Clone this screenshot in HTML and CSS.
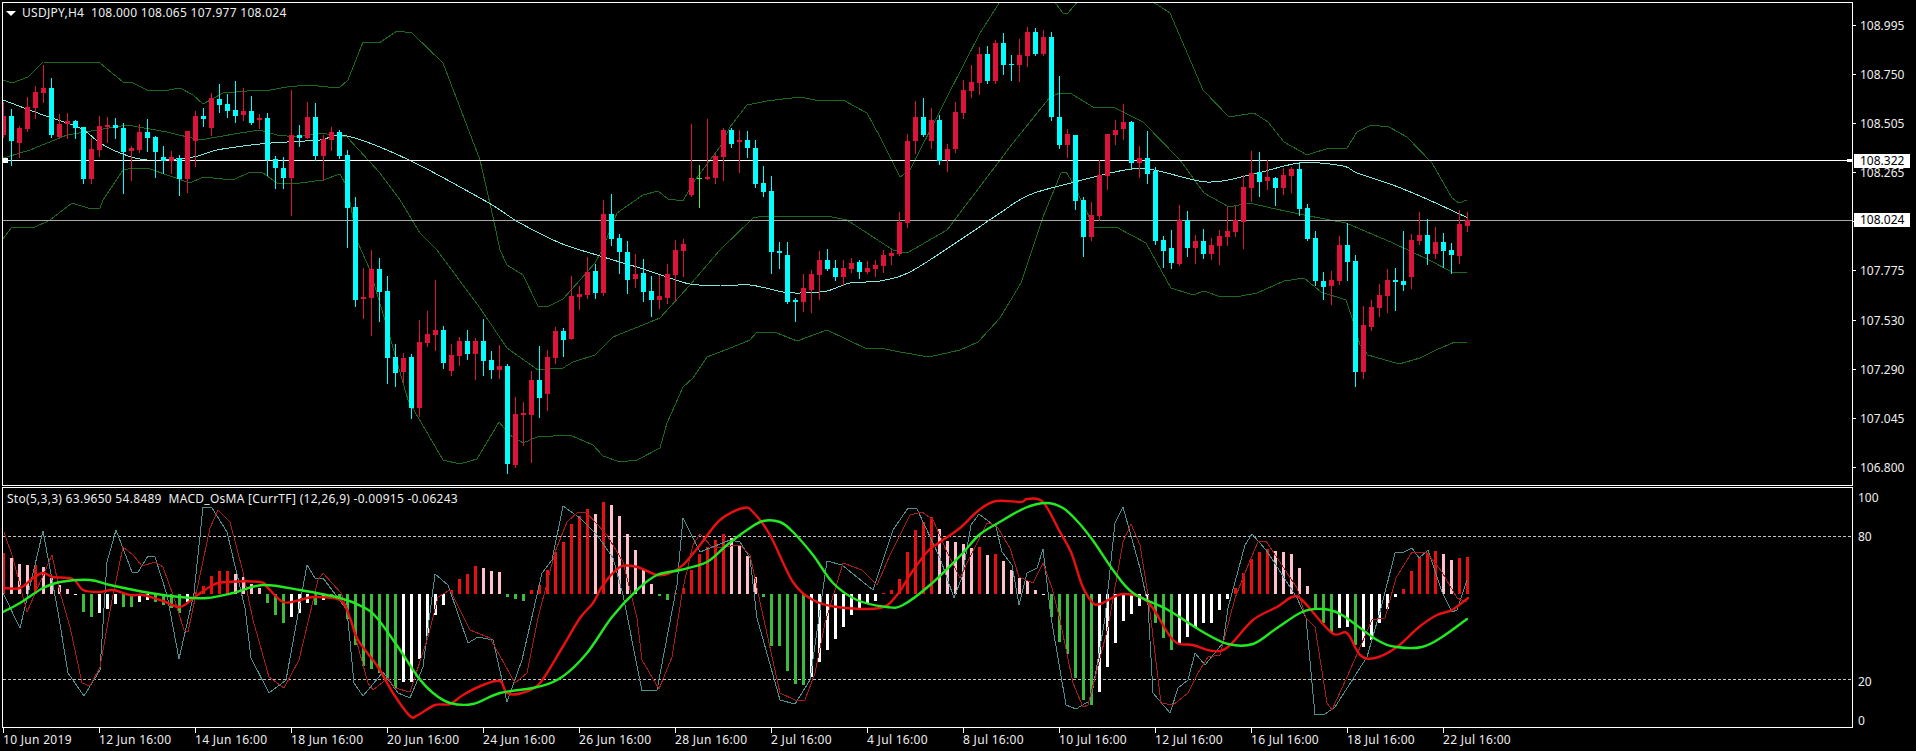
FILE: index.html
```html
<!DOCTYPE html>
<html lang="en">
<head>
<meta charset="utf-8">
<title>USDJPY,H4</title>
<link rel="stylesheet" href="styles.css">
</head>
<body>
<main class="chart">
  <section class="pane pane-main">
    <div class="plot">
      <svg id="main-svg" class="canvas" viewBox="3 3 1849 482" preserveAspectRatio="none"></svg>
      <div class="legend legend-main"><span class="tri"></span><span>USDJPY,H4&nbsp; 108.000 108.065 107.977 108.024</span></div>
    </div>
    <div class="scale scale-main">
      <div class="tick">108.995</div>
      <div class="tick">108.750</div>
      <div class="tick">108.505</div>
      <div class="tick">108.265</div>
      <div class="tick"></div>
      <div class="tick">107.775</div>
      <div class="tick">107.530</div>
      <div class="tick">107.290</div>
      <div class="tick">107.045</div>
      <div class="tick">106.800</div>
      <div class="tag tag-line">108.322</div>
      <div class="tag tag-bid">108.024</div>
    </div>
  </section>
  <section class="pane pane-sub">
    <div class="plot">
      <svg id="sub-svg" class="canvas" viewBox="3 488 1849 239" preserveAspectRatio="none"></svg>
      <div class="legend legend-sub">Sto(5,3,3) 63.9650 54.8489&nbsp; MACD_OsMA [CurrTF] (12,26,9) -0.00915 -0.06243</div>
    </div>
    <div class="scale scale-sub">
      <div class="lvl lvl-100">100</div>
      <div class="lvl lvl-80">80</div>
      <div class="lvl lvl-20">20</div>
      <div class="lvl lvl-0">0</div>
    </div>
  </section>
  <footer class="times">
    <div class="time">10 Jun 2019</div>
    <div class="time">12 Jun 16:00</div>
    <div class="time">14 Jun 16:00</div>
    <div class="time">18 Jun 16:00</div>
    <div class="time">20 Jun 16:00</div>
    <div class="time">24 Jun 16:00</div>
    <div class="time">26 Jun 16:00</div>
    <div class="time">28 Jun 16:00</div>
    <div class="time">2 Jul 16:00</div>
    <div class="time">4 Jul 16:00</div>
    <div class="time">8 Jul 16:00</div>
    <div class="time">10 Jul 16:00</div>
    <div class="time">12 Jul 16:00</div>
    <div class="time">16 Jul 16:00</div>
    <div class="time">18 Jul 16:00</div>
    <div class="time">22 Jul 16:00</div>
  </footer>
</main>
<script src="script.js"></script>
</body>
</html>
```
FILE: styles.css
```css
* { box-sizing: border-box; }
html, body { margin: 0; height: 751px; background: #000; overflow: hidden; }
body { font-family: "Noto Sans", "Liberation Sans", sans-serif; font-size: 12px; color: #eee; }
.chart { padding: 2px 0 0 2px; }
.pane { display: flex; }
.pane-sub { margin-top: 1px; }
.plot { position: relative; width: 1851px; border: 1px solid #fff; }
.pane-main .plot { height: 484px; }
.pane-sub .plot { height: 241px; }
.canvas { display: block; width: 100%; height: 100%; }
.legend { position: absolute; white-space: pre; line-height: 14px; letter-spacing: .28px; }
.legend-main { top: 3px; left: 3px; display: flex; align-items: center; gap: 6px; }
.legend-sub { top: 4px; left: 4px; }
.tri { width: 0; height: 0; border-left: 5px solid transparent; border-right: 5px solid transparent; border-top: 5px solid #fff; }
.scale { position: relative; width: 63px; }
.scale-main { display: flex; flex-direction: column; gap: 35.1px; padding-top: 17px; }
.tick { position: relative; height: 14px; line-height: 14px; padding-left: 7px; }
.tick::before { content: ""; position: absolute; left: 0; top: 6px; width: 3px; height: 1px; background: #fff; }
.tag { position: absolute; left: 1px; width: 56px; padding-left: 6px; background: #fff; color: #000; height: 14px; line-height: 14px; }
.tag-line { top: 152px; }
.tag-bid { top: 211px; }
.lvl { position: absolute; left: 5px; height: 14px; line-height: 14px; }
.lvl-100 { top: 4px; }
.lvl-80 { top: 43px; }
.lvl-20 { top: 188px; }
.lvl-0 { top: 227px; }
.times { display: flex; padding-left: 1px; }
.time { width: 96px; flex: none; line-height: 14px; letter-spacing: .3px; white-space: nowrap; }
.time::before { content: ""; display: block; width: 1px; height: 5px; background: #fff; }
.hline { shape-rendering: crispEdges; stroke-width: 1; }
.hline-white { stroke: #fff; }
.hline-grey { stroke: #a8a8a8; }
.hline-dash { stroke: #c4c4c4; stroke-dasharray: 3 2; }
.mark { fill: #fff; shape-rendering: crispEdges; }
.line { fill: none; stroke-linejoin: round; stroke-linecap: round; }
.band { stroke: #1c6a1e; stroke-width: 1; shape-rendering: crispEdges; }
.ma { stroke: #7fe6e0; stroke-width: 1; shape-rendering: crispEdges; }
.sto { stroke: #4f8f90; stroke-width: 1; shape-rendering: crispEdges; }
.sig { stroke: #a81c1c; stroke-width: 1; shape-rendering: crispEdges; }
.thick-r { stroke: #e81010; stroke-width: 2.4; }
.thick-g { stroke: #22ea22; stroke-width: 2.4; }
.bar { shape-rendering: crispEdges; }
.c0 { fill: #dc143c; }
.c1 { fill: #00ffff; }
.c2 { fill: #44ee44; }
.hr { fill: #e81010; }
.hp { fill: #ffc0cb; }
.hw { fill: #fff; }
.hg { fill: #3cbc3c; }
```
FILE: script.js
```js
(function () {
const candles = [
[0,102,116,135,137],[1,109,116,141,165],[0,126,128,143,157],[0,97,107,129,131],[0,86,92,108,118],[0,65,88,93,102],[1,78,88,135,137],[0,114,124,137,138],
[0,113,121,124,138],[1,120,121,128,138],[1,127,127,179,183],[0,138,149,179,183],[0,116,126,150,156],[0,117,125,127,142],[1,118,125,128,138],[1,123,128,152,193],
[0,146,148,151,180],[0,124,132,150,152],[1,119,132,138,151],[1,136,137,152,177],[1,146,157,161,173],[0,151,157,161,173],[1,155,158,179,195],[0,131,131,179,192],
[0,111,116,141,166],[1,108,116,119,126],[0,93,98,128,135],[1,84,99,105,112],[1,94,104,111,117],[1,81,110,116,122],[0,88,111,115,120],[1,96,111,123,124],
[0,114,118,120,128],[1,113,118,160,175],[1,156,159,168,188],[1,157,168,178,188],[0,90,135,178,215],[1,125,135,138,146],[0,102,117,138,138],[1,103,117,156,160],
[0,135,139,156,180],[0,127,132,140,150],[1,130,132,156,158],[1,150,155,208,247],[1,197,207,300,306],[0,268,297,299,318],[0,250,269,298,335],[1,258,269,292,321],
[1,276,291,358,383],[1,344,357,373,386],[0,353,358,372,382],[1,354,357,408,418],[0,320,342,408,416],[0,311,334,343,346],[0,280,330,335,350],[1,326,330,363,368],
[0,344,355,371,375],[0,337,341,356,365],[1,330,341,354,359],[0,338,341,354,379],[1,319,341,361,375],[1,351,360,370,378],[0,345,366,370,378],[1,364,366,464,473],
[0,397,414,465,467],[0,402,413,415,445],[0,371,380,415,462],[1,346,380,398,417],[0,350,357,394,410],[0,327,331,358,363],[1,328,331,340,356],[0,276,296,339,339],
[0,286,294,297,309],[0,257,272,295,298],[1,264,271,293,298],[0,200,214,293,295],[1,194,214,239,245],[1,234,238,252,273],[1,241,252,280,293],[0,254,274,279,287],
[1,259,273,292,301],[1,276,291,300,316],[0,275,296,300,308],[0,264,274,298,303],[0,240,250,275,301],[0,239,244,251,276],[0,124,178,195,196],[2,165,178,179,207],
[0,119,177,179,179],[0,153,156,178,183],[0,128,130,157,180],[1,128,130,144,147],[0,130,140,142,172],[1,131,140,148,157],[1,140,148,184,187],[1,166,183,192,196],
[1,176,191,252,273],[1,242,251,253,268],[1,242,255,302,303],[1,298,300,302,321],[0,274,288,302,311],[0,270,274,290,312],[0,251,260,275,299],[1,249,260,269,270],
[1,260,268,277,280],[0,260,268,277,285],[0,258,263,269,272],[1,260,262,272,278],[0,261,268,272,273],[0,260,265,269,276],[0,250,255,266,272],[0,250,253,256,264],
[0,212,222,254,255],[0,134,141,223,227],[0,101,117,141,153],[1,98,117,135,136],[0,108,120,141,148],[1,115,120,161,164],[0,144,149,160,171],[0,102,112,149,152],
[0,80,90,113,118],[0,65,82,91,97],[0,47,54,83,94],[1,46,54,81,83],[0,40,43,81,83],[1,33,43,65,74],[1,55,64,65,80],[0,39,55,65,81],
[0,27,32,56,66],[1,28,32,54,55],[0,30,37,54,55],[1,32,37,117,120],[1,76,117,145,148],[0,129,134,145,157],[1,135,135,201,209],[1,197,200,237,256],
[0,202,215,237,240],[0,160,175,216,220],[0,134,134,176,189],[0,120,130,135,144],[0,104,122,129,139],[1,121,122,163,168],[0,146,158,163,177],[1,131,158,174,183],
[1,167,171,241,244],[1,236,240,251,267],[1,230,248,263,268],[0,205,220,264,265],[1,211,220,248,256],[0,235,241,248,263],[1,229,241,254,258],[0,238,245,254,259],
[0,230,236,246,264],[0,207,231,237,245],[0,206,220,232,236],[0,175,187,222,248],[0,151,173,188,201],[1,152,172,182,196],[0,160,177,181,189],[1,177,178,188,205],
[0,168,175,188,194],[0,167,169,176,192],[1,162,169,209,215],[1,204,208,239,240],[1,231,238,281,285],[1,272,281,287,299],[0,271,280,286,304],[0,236,245,281,284],
[1,223,245,262,280],[1,255,261,372,386],[0,306,325,372,378],[0,300,307,327,330],[0,284,295,308,316],[0,269,280,296,312],[1,268,280,282,310],[1,231,281,285,290],
[0,234,240,277,288],[0,212,235,241,244],[1,219,235,254,264],[0,227,242,254,258],[1,233,242,251,267],[1,243,250,255,273],[0,210,224,256,263],[0,212,220,226,231]
];

const hist = "r41 p36 p30 p29 r29 p27 p16 p9 p5 w-1 g-18 g-23 w-19 w-15 w-10 g-13 g-13 w-8 w-6 g-8 g-11 g-14 g-19 w-8 r2 r8 r18 r23 r23 p20 p17 p10 p6 g-9 g-21 g-29 w-23 w-19 w-9 g-11 w-6 g-1 g-3 g-25 g-51 g-72 g-75 g-79 g-86 g-95 w-88 w-88 w-65 w-42 w-21 w-11 r4 r15 r20 r28 p26 p23 p22 g-3 g-5 g-7 r4 r9 r24 r42 r52 r70 r78 r85 p80 r92 p89 p78 p60 p44 p24 p10 g-2 g-6 r1 r6 r24 r40 r47 r54 r60 p56 p49 p38 p17 g-3 g-52 g-52 g-77 g-90 g-91 w-83 w-68 w-56 w-45 w-33 w-21 w-14 w-9 w-7 r1 r4 r15 r42 r64 r72 r77 p65 p53 p52 p50 p46 r47 p39 r40 p33 p24 p16 p13 p4 w-1 g-23 g-48 g-60 g-84 g-106 g-111 w-98 w-73 w-49 w-27 w-20 w-12 w-8 g-29 g-44 g-56 w-49 w-43 w-34 w-29 w-29 w-16 w-5 r6 r21 r35 r42 r45 p43 p42 p40 p26 p8 g-14 g-29 g-39 w-34 w-33 g-51 w-53 w-46 w-29 w-15 w-3 r5 r23 r37 r41 r43 p40 p34 r36 r37".split(" ");

const bandTop = "3,80 12,83 28,77 43,62 100,63 123,82 133,83 147,90 163,91 180,88 193,95 203,104 223,93 247,91 270,90 287,87 307,85 339,88 348,80 363,42 379,43 397,31 412,33 443,63 480,160 493,217 500,250 507,265 523,275 538,306 547,307 563,299 580,280 595,263 602,250 617,213 643,195 658,191 668,199 683,201 693,183 720,147 730,127 747,105 767,101 800,97 820,101 843,100 867,113 880,137 900,177 910,170 947,97 980,33 1001,0 1040,-12 1053,0 1063,13 1068,13 1079,0 1115,-12 1150,0 1170,13 1203,90 1229,117 1254,113 1268,122 1284,142 1307,155 1329,148 1347,148 1357,132 1371,125 1389,127 1407,137 1432,163 1452,198 1459,203 1467,200";
const bandMid = "3,158 7,157 30,150 67,135 127,125 167,132 200,140 240,133 260,130 277,135 297,137 320,133 347,137 380,173 400,200 420,233 437,250 480,308 507,348 538,370 563,368 573,362 595,355 613,337 660,318 690,285 720,250 753,218 763,216 827,216 847,220 893,250 907,253 947,230 1013,143 1050,97 1060,93 1070,93 1093,107 1113,107 1143,122 1180,160 1204,193 1229,207 1250,203 1271,208 1304,215 1346,223 1393,243 1429,260 1452,272 1467,272";
const bandLow = "3,239 12,227 33,228 50,220 72,203 88,208 100,208 103,200 123,170 133,168 147,168 173,177 190,183 203,177 233,180 250,172 263,173 277,183 300,183 323,180 340,174 347,187 358,243 370,270 387,327 408,400 443,460 460,464 477,459 499,422 510,435 523,443 537,437 570,435 593,445 603,456 620,462 637,460 660,448 667,423 683,387 693,378 707,357 733,347 750,340 757,332 777,333 797,341 827,330 867,349 880,348 900,352 929,357 960,350 978,342 1000,318 1021,283 1043,217 1061,173 1066,172 1073,183 1094,227 1118,228 1146,243 1171,288 1193,295 1204,291 1218,296 1236,297 1257,293 1284,281 1304,278 1321,292 1346,300 1355,327 1360,345 1368,355 1399,364 1420,358 1436,350 1455,342 1467,343";
const ma = "3,100 43,115 80,128 100,143 120,153 147,160 193,157 217,150 260,144 287,142 320,140 347,136 407,159 480,198 500,210 520,223 560,243 600,256 640,268 667,277 690,284 720,286 750,285 783,292 800,293 827,291 850,283 880,281 910,272 960,240 975,230 1000,213 1029,195 1071,183 1125,170 1154,170 1207,182 1250,175 1300,163 1343,166 1357,173 1393,185 1429,200 1468,218";

const sto = "3,593 20,628 43,531 58,612 68,673 84,696 100,670 107,562 116,530 132,572 138,572 148,556 155,557 167,595 179,659 194,593 203,507 212,508 227,532 245,608 251,658 269,693 286,680 307,565 315,578 323,578 347,610 354,683 363,696 383,672 398,693 410,698 423,667 435,574 448,585 468,643 478,637 493,640 507,702 522,660 542,573 552,560 563,506 580,518 597,535 613,558 623,595 642,691 657,690 677,585 683,518 700,552 730,540 740,542 750,558 757,618 780,700 795,704 810,680 827,561 842,565 873,590 893,530 908,508 917,509 940,558 954,598 962,577 971,525 979,514 996,527 1002,552 1012,565 1019,605 1027,573 1037,568 1043,549 1051,617 1066,705 1076,709 1091,700 1105,618 1115,523 1123,507 1140,568 1148,605 1153,693 1170,713 1178,688 1188,680 1195,653 1205,665 1223,643 1228,608 1245,545 1252,534 1266,550 1274,562 1297,598 1306,618 1315,715 1325,714 1335,707 1367,657 1381,608 1395,553 1404,552 1412,548 1419,558 1428,550 1442,592 1452,612 1457,610 1467,580";
const sig = "4,532 13,558 27,612 52,555 60,592 70,627 82,683 90,686 100,667 112,600 123,547 133,555 142,566 155,562 163,567 173,595 184,630 188,632 199,580 210,528 218,510 230,522 243,572 253,620 269,677 284,688 299,660 318,580 323,573 341,593 348,610 368,683 373,690 388,678 395,688 410,692 428,637 438,597 450,590 470,630 490,638 515,683 527,673 538,618 555,552 567,522 578,512 587,513 607,535 623,562 637,618 642,660 659,689 672,657 683,588 693,545 700,534 713,548 740,545 750,555 760,602 780,693 795,700 805,700 815,673 825,623 843,563 862,570 877,585 890,555 910,515 922,512 933,520 947,552 960,578 971,555 987,523 996,525 1010,548 1019,577 1033,583 1043,563 1052,588 1060,620 1073,683 1083,707 1088,705 1108,627 1123,542 1131,524 1140,545 1148,595 1161,703 1173,705 1188,693 1198,673 1208,657 1220,655 1235,598 1251,558 1258,542 1266,541 1297,588 1306,618 1315,627 1327,703 1332,710 1347,677 1372,620 1385,618 1396,578 1412,552 1427,553 1442,572 1457,598 1467,602";
const red = "3,588 20,588 33,578 43,573 53,577 73,579 83,590 100,592 113,590 130,595 143,595 163,601 180,607 195,597 213,585 227,582 260,582 267,587 283,602 300,600 313,597 340,600 350,618 358,640 378,667 393,693 410,716 418,715 435,705 450,704 463,695 483,685 500,681 507,693 522,693 540,683 562,648 580,618 593,603 603,585 620,567 637,567 657,575 670,573 683,565 700,545 720,520 743,508 753,512 770,535 793,582 813,600 837,607 880,608 897,595 910,575 927,552 940,542 960,528 979,510 996,501 1021,502 1027,499 1043,502 1060,532 1071,552 1082,585 1092,602 1100,604 1123,594 1148,602 1173,640 1193,645 1213,651 1228,647 1253,620 1277,607 1292,597 1302,600 1332,633 1347,633 1360,655 1375,658 1397,647 1419,627 1437,615 1452,610 1468,598";
const lime = "3,612 20,603 43,588 60,582 90,580 110,585 150,593 180,597 207,598 233,593 263,585 300,590 340,598 363,607 377,618 398,647 418,677 433,693 450,703 473,704 500,693 537,687 562,677 587,653 612,617 637,590 657,575 680,570 707,562 727,545 747,530 763,521 780,522 793,532 813,555 833,583 857,600 887,607 903,605 930,585 960,556 979,535 998,523 1025,508 1046,503 1063,508 1079,523 1094,542 1113,570 1133,593 1168,610 1203,632 1228,644 1253,644 1277,628 1302,612 1322,609 1342,615 1377,640 1397,647 1422,647 1442,637 1467,619";

const rect = (cls, x, y, w, h) => `<rect class="${cls}" x="${x}" y="${y}" width="${w}" height="${h}"/>`;
const poly = (cls, pts) => `<polyline class="line ${cls}" points="${pts}"/>`;
const hline = (cls, y) => `<line class="hline ${cls}" x1="3" x2="1852" y1="${y + 0.5}" y2="${y + 0.5}"/>`;

/* Catmull-Rom spline through the sampled points, for the smoothed indicator curves */
function smooth(cls, pts) {
  const p = pts.split(" ").map(s => s.split(",").map(Number));
  let d = `M${p[0][0]} ${p[0][1]}`;
  for (let i = 0; i < p.length - 1; i++) {
    const a = p[Math.max(i - 1, 0)], b = p[i], c = p[i + 1], e = p[Math.min(i + 2, p.length - 1)];
    const c1x = b[0] + (c[0] - a[0]) / 6, c1y = b[1] + (c[1] - a[1]) / 6;
    const c2x = c[0] - (e[0] - b[0]) / 6, c2y = c[1] - (e[1] - b[1]) / 6;
    d += `C${c1x.toFixed(1)} ${c1y.toFixed(1)} ${c2x.toFixed(1)} ${c2y.toFixed(1)} ${c[0]} ${c[1]}`;
  }
  return `<path class="line ${cls}" d="${d}"/>`;
}

let mainSvg = "";
mainSvg += poly("band", bandTop) + poly("band", bandMid) + poly("band", bandLow) + smooth("ma", ma);
mainSvg += hline("hline-white", 160) + hline("hline-grey", 220);
mainSvg += rect("mark", 3, 158, 5, 5) + rect("mark", 1847, 159, 5, 3);
candles.forEach((c, k) => {
  const x = 3 + 8 * k;
  const cls = "bar c" + c[0];
  mainSvg += rect(cls, x, c[1], 1, c[4] - c[1] + 1);
  mainSvg += rect(cls, x - 2, c[2], 5, Math.max(c[3] - c[2], 1));
});
document.getElementById("main-svg").innerHTML = mainSvg;

let subSvg = hline("hline-dash", 536) + hline("hline-dash", 679);
hist.forEach((h, k) => {
  const x = 3 + 8 * k - 1;
  const v = parseInt(h.slice(1), 10);
  const cls = "bar h" + h[0];
  subSvg += v >= 0 ? rect(cls, x, 594 - v, 3, v) : rect(cls, x, 594, 3, -v);
});
subSvg += poly("sto", sto) + poly("sig", sig) + smooth("thick-r", red) + smooth("thick-g", lime);
document.getElementById("sub-svg").innerHTML = subSvg;
})();
```
